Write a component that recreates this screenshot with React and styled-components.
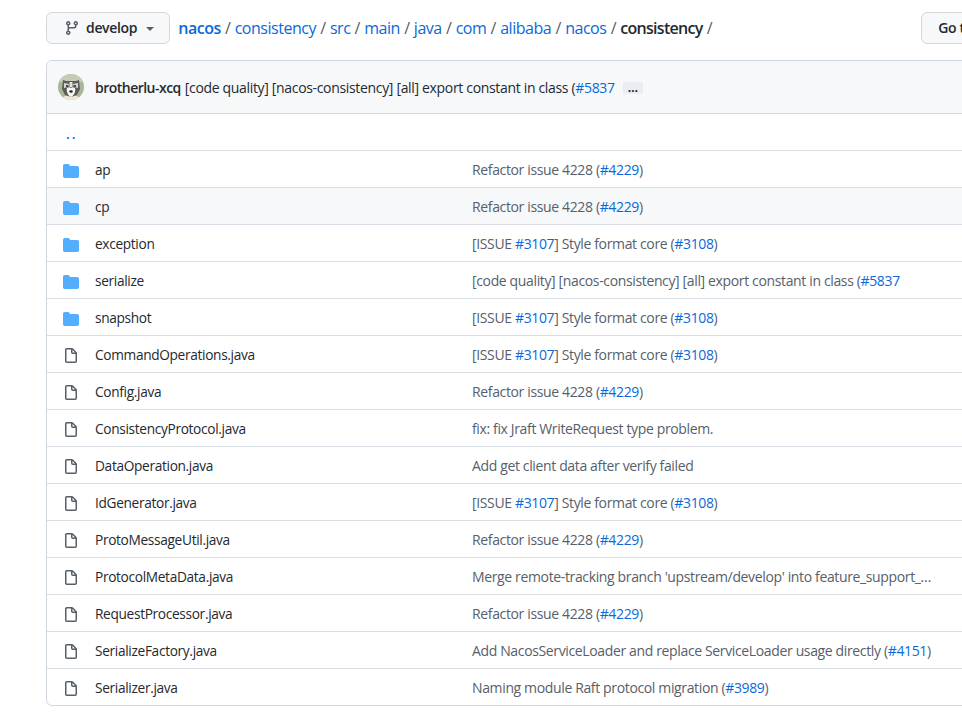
import React from "react";
import styled, { createGlobalStyle } from "styled-components";

const Global = createGlobalStyle`
  html, body { margin: 0; padding: 0; background: #fff; overflow: hidden; height: 722px; }
  body { font-family: "Open Sans", "Liberation Sans", sans-serif; font-size: 14px; color: #24292f; }
`;
const Page = styled.div`
  width: 1100px;
  padding: 11px 0 0 46px;
`;
const TopBar = styled.div`
  display: flex;
  align-items: center;
  height: 33px;
  margin-bottom: 16px;
`;
const Button = styled.div`
  display: inline-flex;
  align-items: center;
  height: 30px;
  padding: 0 15px 0 ${p => (p.$plain ? 16 : 17)}px;
  border: 1px solid #d5d8da;
  border-radius: 6px;
  background: #f6f8fa;
  font-weight: 600;
  font-size: 14px;
  letter-spacing: -0.33px;
  box-sizing: content-box;
  color: #24292f;
  white-space: nowrap;
`;
const BranchIcon = styled.svg`
  width: 16px;
  height: 16px;
  display: block;
  margin-right: 6px;
  fill: #57606a;
`;
const Caret = styled.span`
  width: 0;
  height: 0;
  margin-left: 9px;
  margin-top: 2px;
  border: 4px solid transparent;
  border-top-color: #57606a;
  border-bottom: 0;
`;
const Crumbs = styled.div`
  margin-left: 8px;
  font-size: 16px;
  letter-spacing: -0.47px;
  color: #57606a;
  flex: 0 0 743px;
  white-space: nowrap;
  word-spacing: 0.55px;
`;
const CrumbLink = styled.a`
  color: #0969da;
  font-weight: ${p => (p.$strong ? 600 : 400)};
`;
const Current = styled.strong`
  font-weight: 600;
  color: #24292f;
  letter-spacing: -0.72px;
`;
const Panel = styled.div`
  border: 1px solid #d0d7de;
  border-radius: 6px;
  width: 1000px;
`;
const CommitBar = styled.div`
  display: flex;
  align-items: center;
  height: 52px;
  padding-left: 11px;
  background: #f6f8fa;
  border-bottom: 1px solid #d0d7de;
  border-radius: 6px 6px 0 0;
  letter-spacing: -0.33px;
  white-space: nowrap;
`;
const Avatar = styled.svg`
  width: 26px;
  height: 26px;
  border-radius: 50%;
  margin-right: 11px;
  flex: none;
`;
const Author = styled.span`
  font-weight: 600;
  margin-right: 4px;
  letter-spacing: -0.52px;
`;
const Link = styled.a`
  color: #0969da;
`;
const Ellipsis = styled.span`
  display: inline-flex;
  align-items: center;
  justify-content: center;
  width: 20px;
  height: 12px;
  margin-left: 8px;
  margin-top: 2px;
  background: #eaeef2;
  border-radius: 1px;
  font-size: 12px;
  font-weight: 700;
  line-height: 6px;
`;
const UpRow = styled.div`
  height: 36px;
  padding-left: 19px;
  line-height: 40px;
  color: #0969da;
  font-weight: 600;
  letter-spacing: 2px;
`;
const Row = styled.div`
  display: grid;
  grid-template-columns: 32px 377px 461px;
  align-items: center;
  height: 36px;
  border-top: 1px solid #d8dee4;
  padding-left: 16px;
  background: ${p => (p.$hover ? "#f6f8fa" : "transparent")};
  white-space: nowrap;
`;
const Icon = styled.svg`
  width: 16px;
  height: 16px;
  display: block;
  margin-top: 4px;
  fill: ${p => (p.$folder ? "#54aeff" : "#57606a")};
`;
const Name = styled.span`
  color: #24292f;
  font-size: 13.7px;
  letter-spacing: -0.33px;
`;
const Message = styled.span`
  color: #57606a;
  overflow: hidden;
  text-overflow: ellipsis;
  letter-spacing: -0.36px;
`;

const FILE = "M3.75 1.5a.25.25 0 00-.25.25v11.5c0 .138.112.25.25.25h8.5a.25.25 0 00.25-.25V6H9.75A1.75 1.75 0 018 4.25V1.5H3.75zm5.75.56v2.19c0 .138.112.25.25.25h2.19L9.5 2.06zM2 1.75C2 .784 2.784 0 3.75 0h5.086c.464 0 .909.184 1.237.513l3.414 3.414c.329.328.513.773.513 1.237v8.086A1.75 1.75 0 0112.25 15h-8.5A1.75 1.75 0 012 13.25V1.75z";
const FOLDER = "M1.75 1A1.75 1.75 0 000 2.75v10.5C0 14.216.784 15 1.75 15h12.5A1.75 1.75 0 0016 13.25v-8.5A1.75 1.75 0 0014.25 3H7.5a.25.25 0 01-.2-.1l-.9-1.2C6.07 1.26 5.55 1 5 1H1.75z";
const BRANCH = "M11.75 2.5a.75.75 0 100 1.5.75.75 0 000-1.5zm-2.25.75a2.25 2.25 0 113 2.122V6A2.5 2.5 0 0110 8.5H6a1 1 0 00-1 1v1.128a2.251 2.251 0 11-1.5 0V5.372a2.25 2.25 0 111.5 0v1.836A2.492 2.492 0 016 7h4a1 1 0 001-1v-.628A2.25 2.25 0 019.5 3.25zM4.25 12a.75.75 0 100 1.5.75.75 0 000-1.5zM3.5 3.25a.75.75 0 111.5 0 .75.75 0 01-1.5 0z";

const R4228 = ["Refactor issue 4228 (", ["#4229"], ")"];
const R3107 = ["[ISSUE ", ["#3107"], "] Style format core (", ["#3108"], ")"];
const rows = [
  ["d", "ap", R4228],
  ["d", "cp", R4228, true],
  ["d", "exception", R3107],
  ["d", "serialize", ["[code quality] [nacos-consistency] [all] export constant in class (", ["#5837"]]],
  ["d", "snapshot", R3107],
  ["f", "CommandOperations.java", R3107],
  ["f", "Config.java", R4228],
  ["f", "ConsistencyProtocol.java", ["fix: fix Jraft WriteRequest type problem."]],
  ["f", "DataOperation.java", ["Add get client data after verify failed"]],
  ["f", "IdGenerator.java", R3107],
  ["f", "ProtoMessageUtil.java", R4228],
  ["f", "ProtocolMetaData.java", ["Merge remote-tracking branch 'upstream/develop' into feature_support_grpc_core"]],
  ["f", "RequestProcessor.java", R4228],
  ["f", "SerializeFactory.java", ["Add NacosServiceLoader and replace ServiceLoader usage directly (", ["#4151"], ")"]],
  ["f", "Serializer.java", ["Naming module Raft protocol migration (", ["#3989"], ")"]],
];

const Husky = () => (
  <Avatar viewBox="0 0 26 26">
    <defs>
      <filter id="soft" x="-10%" y="-10%" width="120%" height="120%">
        <feGaussianBlur stdDeviation="0.5" />
      </filter>
    </defs>
    <rect width="26" height="26" fill="#a9b69a" />
    <g filter="url(#soft)">
      <rect x="0" y="0" width="26" height="8" fill="#c4ccb8" />
      <ellipse cx="13" cy="25" rx="9" ry="4" fill="#f1e6dc" />
      <path d="M5 6l3 1h10l3-1 1 9-3 6-6 2-6-2-3-6z" fill="#5b5d59" />
      <path d="M6 9l5 1-1 3-4 1zM20 9l-5 1 1 3 4 1z" fill="#d8d8d2" />
      <path d="M11.500 8l3 0 0 5-3 0z" fill="#e4e4de" />
      <path d="M9 14c2-1 3-1 4 0 1-1 2-1 4 0 1 3-1 8-4 9-3-1-5-6-4-9z" fill="#f5f5f1" />
      <circle cx="9" cy="12" r="1" fill="#171717" />
      <circle cx="17" cy="12" r="1" fill="#171717" />
      <ellipse cx="13" cy="17.500" rx="1.700" ry="1.300" fill="#1d1d1d" />
    </g>
  </Avatar>
);

export default function App() {
  return (
    <Page>
      <Global />
      <TopBar>
        <Button>
          <BranchIcon viewBox="0 0 16 16"><path fillRule="evenodd" d={BRANCH} /></BranchIcon>
          develop
          <Caret />
        </Button>
        <Crumbs>
          <CrumbLink $strong>nacos</CrumbLink> / <CrumbLink>consistency</CrumbLink> / <CrumbLink>src</CrumbLink> / <CrumbLink>main</CrumbLink> / <CrumbLink>java</CrumbLink> / <CrumbLink>com</CrumbLink> / <CrumbLink>alibaba</CrumbLink> / <CrumbLink>nacos</CrumbLink> / <Current>consistency</Current> /
        </Crumbs>
        <Button $plain>Go to file</Button>
      </TopBar>
      <Panel>
        <CommitBar>
          <Husky />
          <Author>brotherlu-xcq</Author>
          <span>[code quality] [nacos-consistency] [all] export constant in class (<Link>#5837</Link></span>
          <Ellipsis>…</Ellipsis>
        </CommitBar>
        <UpRow>..</UpRow>
        {rows.map(([kind, name, msg, hover]) => (
          <Row key={name} $hover={hover}>
            <Icon viewBox="0 0 16 16" $folder={kind === "d"}>
              <path fillRule="evenodd" d={kind === "d" ? FOLDER : FILE} />
            </Icon>
            <Name>{name}</Name>
            <Message>
              {msg.map((m, i) => (Array.isArray(m) ? <Link key={i}>{m[0]}</Link> : <span key={i}>{m}</span>))}
            </Message>
          </Row>
        ))}
      </Panel>
    </Page>
  );
}
